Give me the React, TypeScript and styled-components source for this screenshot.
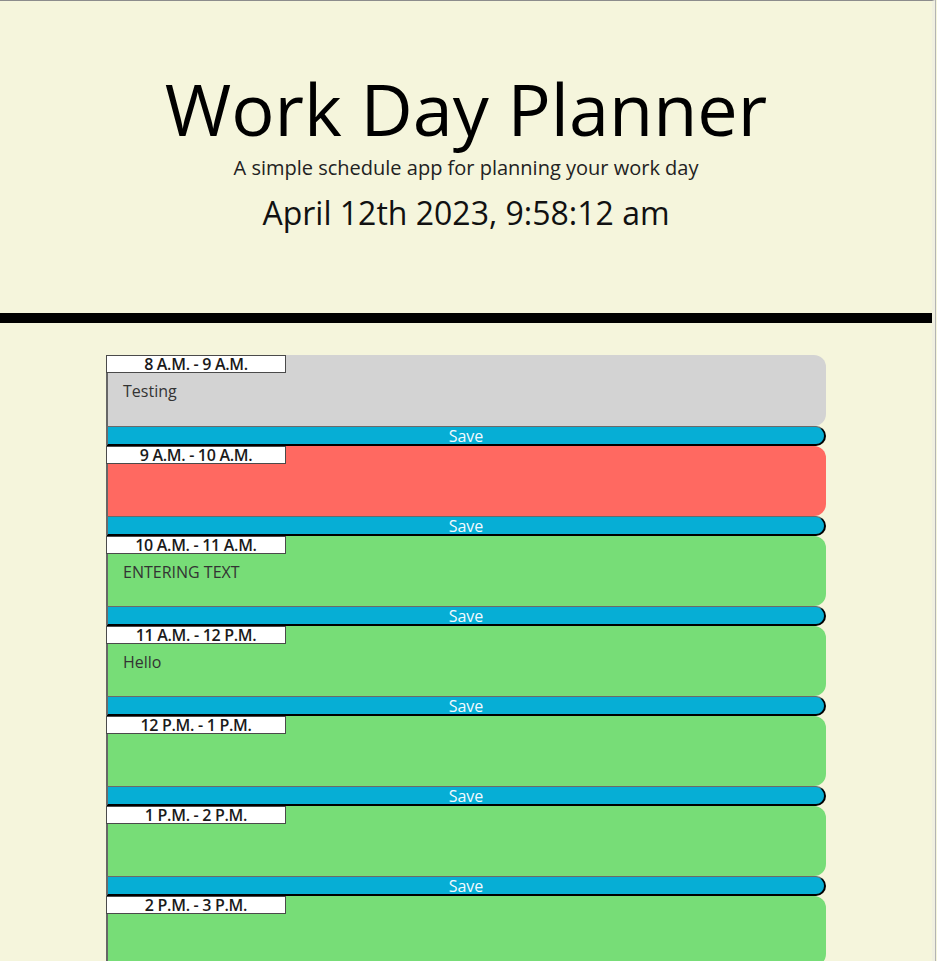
import React, { useState } from 'react';
import styled, { createGlobalStyle } from 'styled-components';

const GlobalStyle = createGlobalStyle`
  html, body {
    margin: 0;
    padding: 0;
    background: #f5f5dc;
  }

  body {
    font-family: "Open Sans", sans-serif;
  }
`;

type Tense = 'past' | 'present' | 'future';

const tenseColors: Record<Tense, string> = {
  past: '#d3d3d3',
  present: '#ff6961',
  future: '#77dd77',
};

const Page = styled.div`
  width: 932px;
  min-height: 961px;
  border-top: 1px solid #8c8c8c;
  border-right: 3px solid #f0f0e0;
  box-shadow: 1px 0 0 #b4b4b4;
  background: #f5f5dc;
`;

const Header = styled.header`
  display: flex;
  flex-flow: column nowrap;
  align-items: center;

  height: 312px;
  padding-top: 71px;
  box-sizing: border-box;
`;

const Title = styled.h1`
  margin: 0;

  color: #000;
  font-size: 72px;
  font-weight: 400;
  line-height: 72px;
`;

const Lead = styled.p`
  margin: 12px 0 0;

  color: #222;
  font-size: 20px;
  line-height: 24px;
`;

const CurrentDay = styled.p`
  margin: 13px 0 0;

  color: #111;
  font-size: 32px;
  line-height: 40px;
`;

const Divider = styled.div`
  height: 10px;
  background: #000;
`;

const Schedule = styled.main`
  display: flex;
  flex-flow: column nowrap;

  width: 720px;
  margin: 32px auto 0;
`;

const Row = styled.section`
  display: flex;
  flex-flow: column nowrap;
`;

const TimeBlock = styled.div<{ $tense: Tense; $first?: boolean }>`
  display: flex;
  flex-flow: column nowrap;

  height: ${(props) => (props.$first ? 71 : 70)}px;
  border-radius: 0 12px 12px 0;
  background: ${(props) => tenseColors[props.$tense]};
`;

const HourLabel = styled.div`
  width: 180px;
  height: 18px;
  box-sizing: border-box;
  border: 1px solid #4a4a4a;
  background: #fff;

  color: #1a1a1a;
  font-size: 16px;
  font-weight: 600;
  line-height: 16px;
  text-align: center;
  letter-spacing: -0.3px;
`;

const Description = styled.textarea`
  flex: 1;

  margin: 0;
  padding: 7px 15px 0;
  border: none;
  border-left: 2px solid #666;
  background: transparent;
  resize: none;
  outline: none;

  color: #333;
  font-family: "Open Sans", sans-serif;
  font-size: 16px;
  line-height: 22px;
`;

const SaveButton = styled.button`
  height: 20px;
  box-sizing: border-box;
  margin: 0;
  padding: 0;
  border-style: solid;
  border-width: 1px 2px 2px 2px;
  border-color: #6a6a6a #000 #000 #6a6a6a;
  border-radius: 0 11px 11px 0;
  background: #06aed5;

  color: #f4faff;
  font-family: "Open Sans", sans-serif;
  font-size: 16px;
  line-height: 18px;
  cursor: pointer;
`;

interface IHour {
  label: string;
  tense: Tense;
  text: string;
}

const hours: IHour[] = [
  { label: '8 A.M. - 9 A.M.', tense: 'past', text: 'Testing' },
  { label: '9 A.M. - 10 A.M.', tense: 'present', text: '' },
  { label: '10 A.M. - 11 A.M.', tense: 'future', text: 'ENTERING TEXT' },
  { label: '11 A.M. - 12 P.M.', tense: 'future', text: 'Hello' },
  { label: '12 P.M. - 1 P.M.', tense: 'future', text: '' },
  { label: '1 P.M. - 2 P.M.', tense: 'future', text: '' },
  { label: '2 P.M. - 3 P.M.', tense: 'future', text: '' },
  { label: '3 P.M. - 4 P.M.', tense: 'future', text: '' },
  { label: '4 P.M. - 5 P.M.', tense: 'future', text: '' },
];

const HourRow: React.FC<{ hour: IHour; first: boolean }> = ({ hour, first }) => {
  const [text, setText] = useState(hour.text);
  return (
    <Row>
      <TimeBlock $tense={hour.tense} $first={first}>
        <HourLabel>{hour.label}</HourLabel>
        <Description value={text} onChange={(e) => setText(e.target.value)} />
      </TimeBlock>
      <SaveButton>Save</SaveButton>
    </Row>
  );
};

export default function App() {
  return (
    <>
      <GlobalStyle />
      <Page>
        <Header>
          <Title>Work Day Planner</Title>
          <Lead>A simple schedule app for planning your work day</Lead>
          <CurrentDay>April 12th 2023, 9:58:12 am</CurrentDay>
        </Header>
        <Divider />
        <Schedule>
          {hours.map((hour, i) => (
            <HourRow key={hour.label} hour={hour} first={i === 0} />
          ))}
        </Schedule>
      </Page>
    </>
  );
}
